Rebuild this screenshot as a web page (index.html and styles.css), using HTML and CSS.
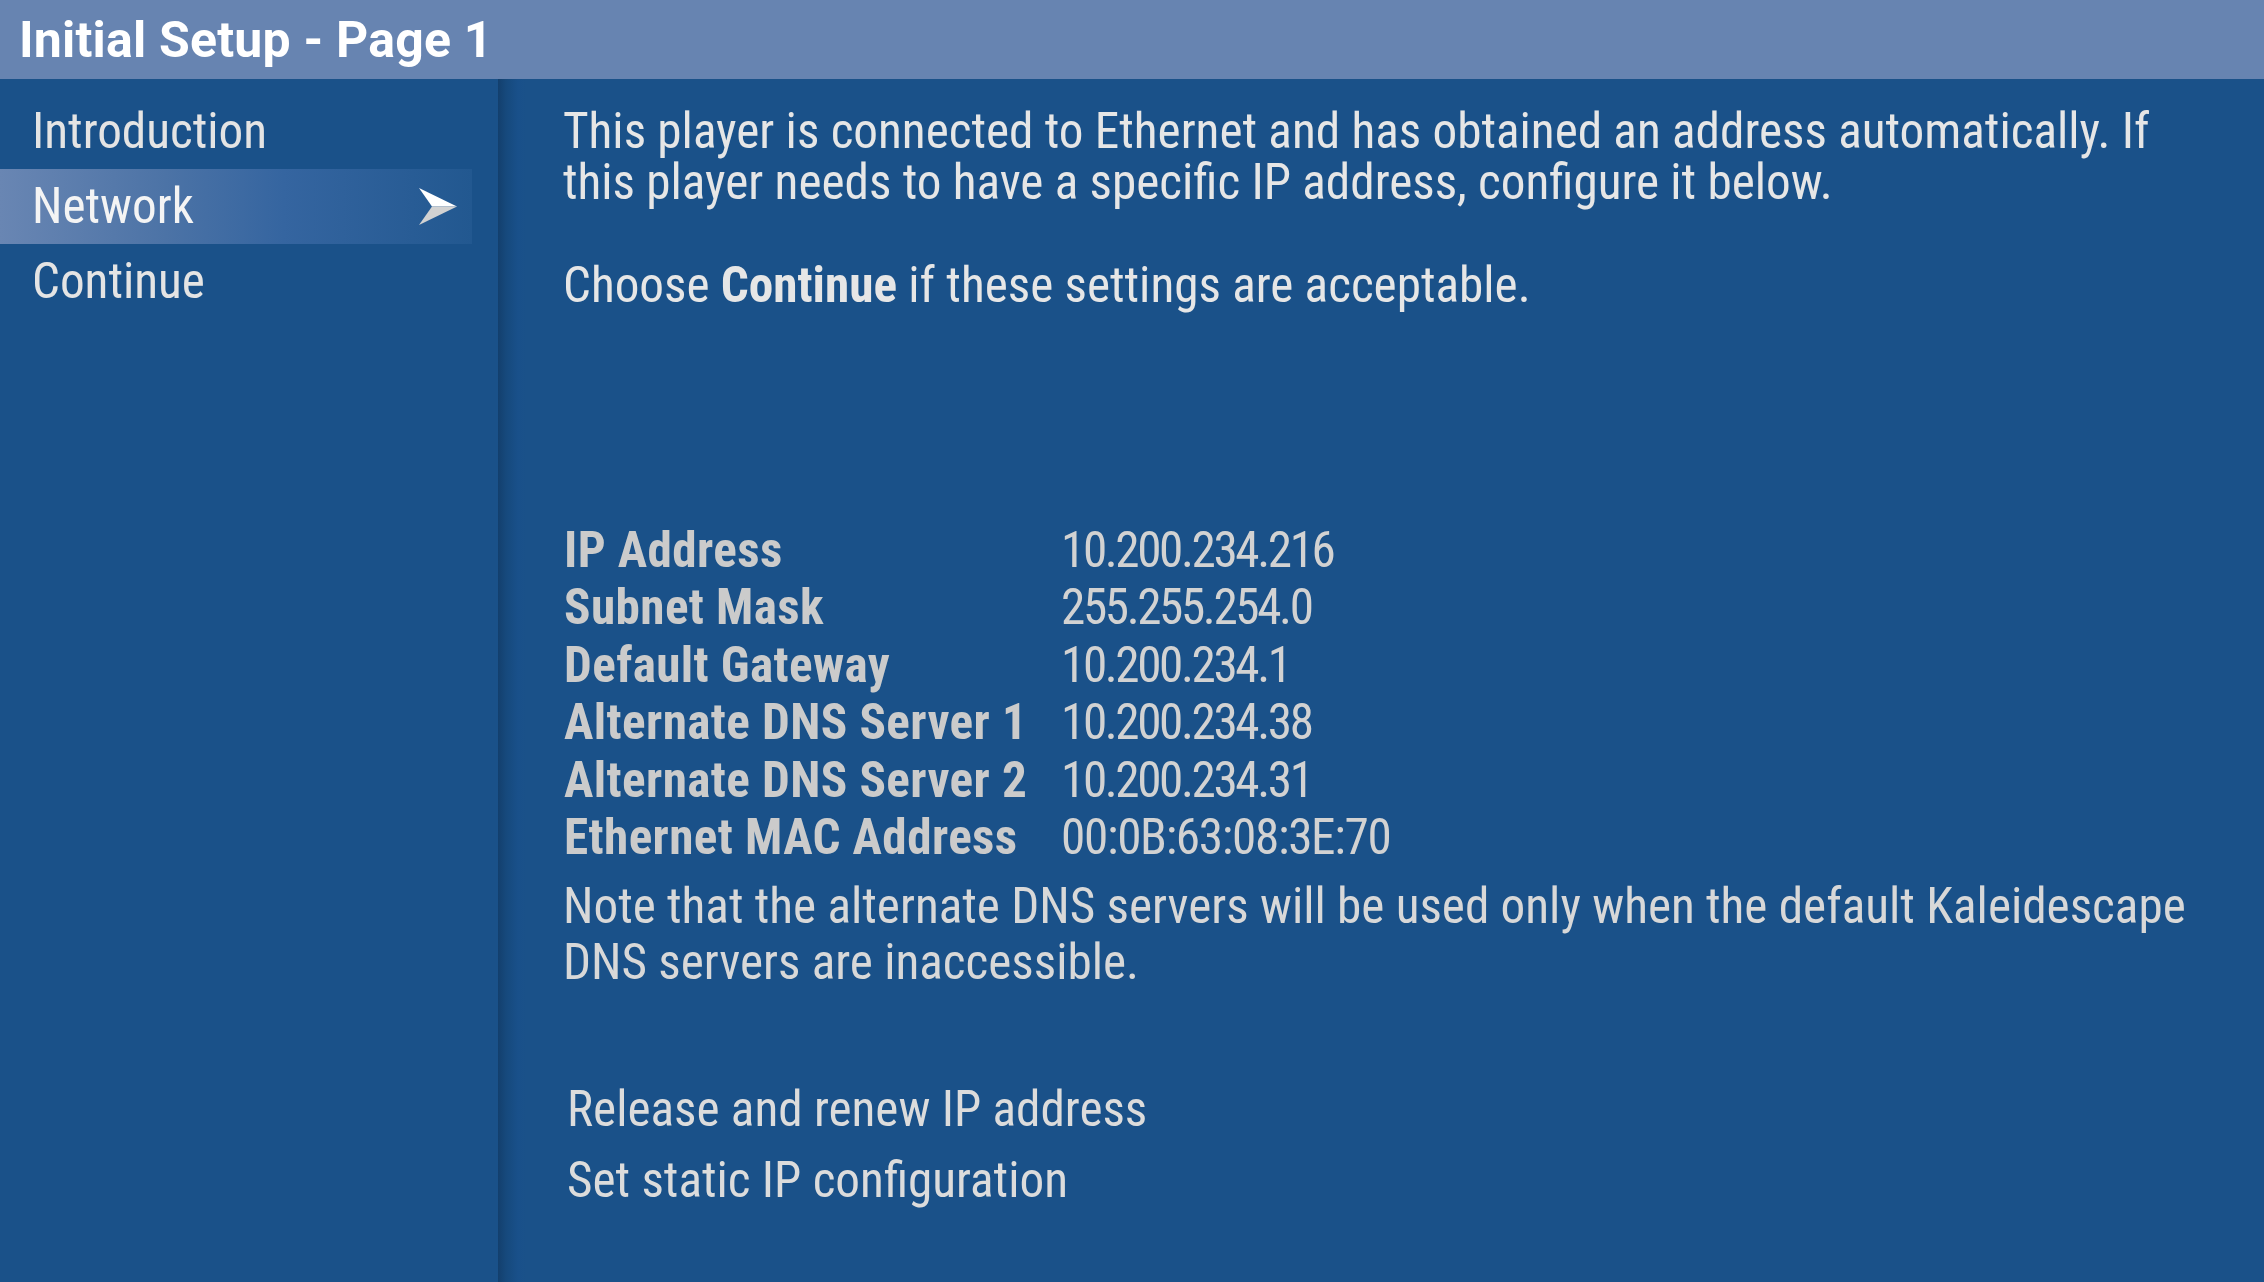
FILE: index.html
```html
<!DOCTYPE html>
<html>
<head>
<meta charset="utf-8">
<title>Initial Setup - Page 1</title>
<link rel="stylesheet" href="styles.css">
</head>
<body>
<div class="screen">
  <header class="titlebar">Initial Setup - Page 1</header>
  <div class="body">
    <nav class="sidebar">
      <div class="nav-item">Introduction</div>
      <div class="nav-item active">
        <span>Network</span>
        <svg class="arrow" width="38" height="37" viewBox="0 0 38 37">
          <polygon points="0,0 38,18.5 13,18.5" fill="#ffffff"/>
          <polygon points="13,18.5 38,18.5 0,37" fill="#d2d2d2"/>
        </svg>
      </div>
      <div class="nav-item">Continue</div>
    </nav>
    <main class="content">
      <p class="intro">This player is connected to Ethernet and has obtained an address automatically. If<br>this player needs to have a specific IP address, configure it below.</p>
      <p class="intro choose">Choose <b>Continue</b> if these settings are acceptable.</p>
      <div class="info">
        <div class="label">IP Address</div><div class="value">10.200.234.216</div>
        <div class="label">Subnet Mask</div><div class="value">255.255.254.0</div>
        <div class="label">Default Gateway</div><div class="value">10.200.234.1</div>
        <div class="label">Alternate DNS Server 1</div><div class="value">10.200.234.38</div>
        <div class="label">Alternate DNS Server 2</div><div class="value">10.200.234.31</div>
        <div class="label">Ethernet MAC Address</div><div class="value mac">00:0B:63:08:3E:70</div>
      </div>
      <p class="note">Note that the alternate DNS servers will be used only when the default Kaleidescape<br>DNS servers are inaccessible.</p>
      <div class="actions">
        <div class="action">Release and renew IP address</div>
        <div class="action">Set static IP configuration</div>
      </div>
    </main>
  </div>
</div>
</body>
</html>
```
FILE: styles.css
```css
html, body {
  margin: 0;
  padding: 0;
  height: 100%;
  overflow: hidden;
}
body {
  background: #1a5189;
  font-family: "Roboto Condensed", "Roboto", sans-serif;
  font-stretch: condensed;
  font-size: 49.2px;
  color: #e6e6e6;
}
.screen {
  display: flex;
  flex-direction: column;
  height: 1282px;
}
.titlebar {
  flex: 0 0 auto;
  height: 77px;
  padding: 2px 0 0 19px;
  line-height: 77px;
  background: #6784b1;
  color: #ffffff;
  font-family: "Roboto", sans-serif;
  font-stretch: normal;
  font-weight: 700;
  font-size: 50px;
  letter-spacing: 0.2px;
  white-space: nowrap;
}
.body {
  flex: 1 1 auto;
  display: flex;
}
.sidebar {
  flex: 0 0 498px;
  padding-top: 15px;
  background: #1a5189;
}
.nav-item {
  width: 472px;
  height: 75px;
  line-height: 75px;
  padding-left: 32px;
  padding-right: 15px;
  box-sizing: border-box;
  color: #e4e4e4;
  white-space: nowrap;
  display: flex;
  align-items: center;
  justify-content: space-between;
}
.nav-item.active {
  color: #f4f4f4;
  background: linear-gradient(to right, #6986b3 0%, #4c73a6 35%, #3565a0 60%, #225890 100%);
}
.arrow {
  display: block;
  flex: 0 0 auto;
}
.content {
  flex: 1 1 auto;
  padding: 27px 0 0 65px;
  background: linear-gradient(to right, #133f6d 0px, #16497c 8px, #19508a 20px, #1a5189 28px);
  white-space: nowrap;
}
.intro {
  margin: 0;
  line-height: 51px;
  color: #e6e6e6;
}
.intro.choose {
  margin-top: 52px;
}
.intro b {
  font-weight: 700;
}
.info {
  margin-top: 211px;
  display: grid;
  grid-template-columns: 498px auto;
  line-height: 57.4px;
}
.label {
  font-weight: 700;
  color: #cbcbcb;
  padding-left: 1px;
  letter-spacing: 0.4px;
}
.value {
  color: #d2d2d2;
  letter-spacing: -2.4px;
}
.value.mac {
  letter-spacing: -1.3px;
}
.note {
  margin: 12px 0 0 0;
  line-height: 56px;
  color: #d8d8d8;
}
.actions {
  margin-top: 84px;
  display: flex;
  flex-direction: column;
}
.action {
  line-height: 71px;
  padding-left: 4px;
  color: #dcdcdc;
}
```
